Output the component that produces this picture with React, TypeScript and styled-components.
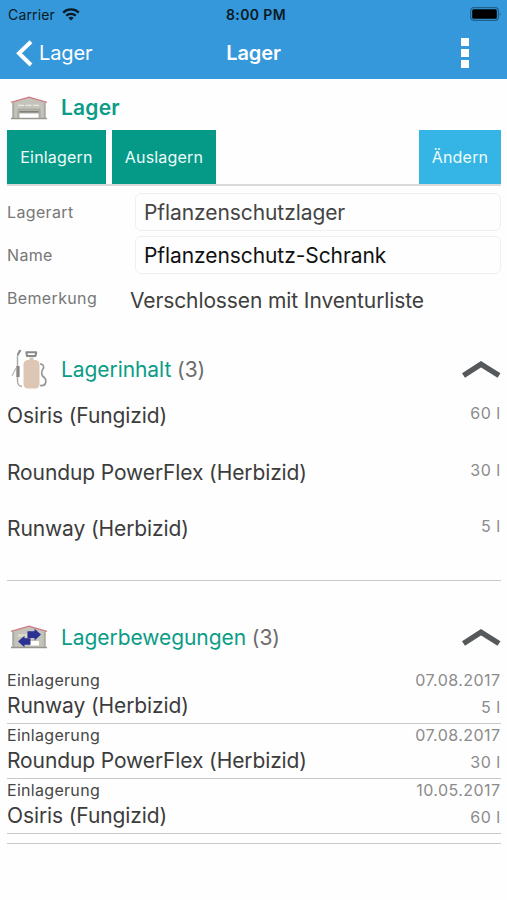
import React from "react";
import styled, { createGlobalStyle } from "styled-components";

const GlobalStyle = createGlobalStyle`
  * { box-sizing: border-box; }
  body {
    margin: 0;
    background: #fefefe;
    font-family: Inter, "Liberation Sans", sans-serif;
    color: #3c3c3c;
  }
`;

const Screen = styled.div`
  width: 100%;
  height: 900px;
  display: flex;
  flex-direction: column;
  overflow: hidden;
`;

const TopArea = styled.header`
  height: 79px;
  background: #3498db;
`;

const StatusBar = styled.div`
  display: grid;
  grid-template-columns: 1fr auto 1fr;
  align-items: center;
  height: 28px;
  padding: 0 5px 0 8px;
  color: #0a1a26;
`;

const Carrier = styled.div`
  display: flex;
  align-items: center;
  gap: 7px;
  font-size: 14px;
  letter-spacing: 0.15px;
`;

const Clock = styled.div`
  padding-left: 2px;
  font-size: 14px;
  font-weight: 600;
  letter-spacing: 0.4px;
`;

const BatterySlot = styled.div`
  display: flex;
  justify-content: flex-end;
`;

const NavBar = styled.nav`
  display: grid;
  grid-template-columns: 1fr auto 1fr;
  align-items: center;
  height: 50px;
  padding: 0 16px;
  color: #fff;
`;

const BackButton = styled.div`
  display: flex;
  align-items: center;
  gap: 6px;
  font-size: 20px;
  letter-spacing: -0.1px;
`;

const NavTitle = styled.div`
  font-size: 20px;
  font-weight: 600;
  letter-spacing: -0.1px;
`;

const MoreButton = styled.div`
  display: flex;
  flex-direction: column;
  align-items: flex-end;
  gap: 3px;
  padding-right: 22px;
`;

const Dot = styled.span`
  width: 8px;
  height: 8px;
  background: #fff;
`;

const Content = styled.main`
  display: flex;
  flex-direction: column;
  padding: 0 6px 0 7px;
`;

const SectionHeader = styled.div<{ $height: number; $space: number }>`
  display: flex;
  align-items: center;
  height: ${(p) => p.$height}px;
  margin-top: ${(p) => p.$space}px;
`;

const IconSlot = styled.div`
  display: flex;
  width: 54px;
  padding-left: 3px;
`;

const SectionTitle = styled.h2<{ $bold?: boolean }>`
  flex: 1;
  margin: 0;
  font-size: 21px;
  font-weight: ${(p) => (p.$bold ? 600 : 400)};
  letter-spacing: ${(p) => (p.$bold ? 0.2 : -0.07)}px;
  color: #0a9c86;
`;

const Count = styled.span`
  color: #6c6c6c;
`;

const ButtonRow = styled.div`
  display: flex;
  gap: 6px;
  height: 57px;
  padding-top: 1px;
  border-bottom: 2px solid #dadada;
`;

const ActionButton = styled.div<{ $width: number; $accent?: boolean }>`
  display: flex;
  align-items: center;
  justify-content: center;
  width: ${(p) => p.$width}px;
  height: 54px;
  margin-left: ${(p) => (p.$accent ? "auto" : 0)};
  background: ${(p) => (p.$accent ? "#34b5e5" : "#049a87")};
  color: #effafa;
  font-size: 16px;
  letter-spacing: 0.2px;
`;

const Form = styled.div`
  display: flex;
  flex-direction: column;
  gap: 5px;
  padding-top: 7px;
`;

const Field = styled.div`
  display: flex;
  align-items: center;
  height: 38px;
`;

const Label = styled.div`
  width: 128px;
  font-size: 16px;
  letter-spacing: 0.35px;
  color: #777;
`;

const Input = styled.div<{ $strong?: boolean }>`
  display: flex;
  align-items: center;
  flex: 1;
  height: 38px;
  padding-left: 8px;
  border: 1px solid #f0f0f0;
  border-radius: 6px;
  font-size: 21px;
  letter-spacing: -0.08px;
  color: ${(p) => (p.$strong ? "#111" : "#444")};
`;

const Note = styled.div`
  padding-top: 4px;
  margin-left: -5px;
  font-size: 21px;
  letter-spacing: -0.11px;
  color: #404040;
`;

const StockList = styled.div`
  display: flex;
  flex-direction: column;
  height: 182px;
  border-bottom: 1px solid #c9c9c9;
`;

const StockRow = styled.div`
  display: flex;
  justify-content: space-between;
  height: 56.5px;
  line-height: 28px;
`;

const ItemName = styled.div`
  padding-top: 3px;
  font-size: 21px;
  letter-spacing: -0.11px;
  color: #3c3c3c;
`;

const Meta = styled.div`
  padding-right: 0.5px;
  font-size: 16px;
  letter-spacing: 0.45px;
  color: #8b8b8b;
`;

const Movement = styled.div`
  height: 55px;
  border-bottom: 1px solid #c9c9c9;
`;

const MovementLine = styled.div<{ $height: number }>`
  display: flex;
  align-items: center;
  justify-content: space-between;
  height: ${(p) => p.$height}px;
`;

const MovementKind = styled.div`
  font-size: 16px;
  letter-spacing: 0.3px;
  color: #464646;
`;

const MovementName = styled.div`
  font-size: 21px;
  letter-spacing: -0.11px;
  color: #3c3c3c;
`;

const Amount = styled(Meta)`
  padding-top: 4px;
`;

const EndRule = styled.div`
  height: 10px;
  border-bottom: 1px solid #c9c9c9;
`;

const WifiIcon = () => (
  <svg width="18" height="13" viewBox="0 0 18 13" fill="none" stroke="#0a1a26" strokeWidth="2.3">
    <path d="M1.2 4.6C5.5.4 12.5.4 16.8 4.6" />
    <path d="M4.2 7.7C6.9 5.2 11.1 5.2 13.8 7.7" />
    <path d="M9 12.5L6.3 9.8C7.8 8.5 10.2 8.5 11.7 9.8Z" fill="#0a1a26" stroke="none" />
  </svg>
);

const BatteryIcon = () => (
  <svg width="32" height="14" viewBox="0 0 32 14">
    <rect x=".7" y=".7" width="27.6" height="12.6" rx="3" fill="none" stroke="#205f88" strokeWidth="1.2" />
    <rect x="2.2" y="2.2" width="24.6" height="9.6" rx="1.5" fill="#000" />
    <path d="M29.7 4.8Q31.5 7 29.7 9.2Z" fill="#205f88" />
  </svg>
);

const BackIcon = () => (
  <svg width="17" height="27" viewBox="0 0 17 27" fill="none" stroke="#fff" strokeWidth="4">
    <path d="M15 1.8L3 13.3L15 25" />
  </svg>
);

const Warehouse = ({ arrows }: { arrows?: boolean }) => (
  <svg width="38" height="24" viewBox="0 0 38 24">
    <path d="M2 6L19 2L36 6V22H2Z" fill="#c3c3bb" />
    <path d="M1 22.5H37" stroke="#96968f" strokeWidth="1.4" />
    <path d="M3.5 7V22M34.5 7V22" stroke="#aaaaa1" strokeWidth="1.5" />
    <path d="M1 6.4L19 1.4L37 6.4" fill="none" stroke="#cf7e86" strokeWidth="1.5" />
    {arrows ? (
      <>
        <path d="M8 9H17V12H8Z" fill="#d9dac9" />
        <path d="M20 16H29V20.5H20Z" fill="#fff" />
        <path d="M17.5 6.3H24.5V3.8L31 9.6L24.5 15.4V12.9H17.5Z" fill="#2b3192" />
        <path d="M20.5 13.2H14.5V10.7L8 16.4L14.5 22.2V19.7H20.5Z" fill="#2b3192" />
      </>
    ) : (
      <>
        <path d="M8 9.3H30" stroke="#e9e9e1" strokeWidth="1.3" strokeDasharray="6 1.5" />
        <path d="M8 22V13.2H30V22" fill="#b4b4ac" stroke="#a4a49c" />
        <path d="M9.5 15.8H28.5" stroke="#76766f" strokeWidth="1.3" />
        <path d="M9.5 17.5H28.5V21.7H9.5Z" fill="#fff" />
      </>
    )}
  </svg>
);

const Sprayer = () => (
  <svg width="38" height="42" viewBox="0 0 38 42" fill="none">
    <path d="M10.5 1.5Q7.5 3 7.5 8V32Q7.5 37 12 37.5" stroke="#a9a9a9" strokeWidth="1.4" />
    <path d="M10.5 1L7.7 6" stroke="#8f8f8f" strokeWidth="2" />
    <path d="M8 17V28" stroke="#858585" strokeWidth="3.2" />
    <path d="M6 19L2 27" stroke="#b9b9b9" strokeWidth="1.3" />
    <path d="M16.3 3.3H26.2L25.5 7H17Z" stroke="#898989" strokeWidth="2" strokeLinejoin="round" />
    <path d="M19.5 8.5H23.5V12H19.5Z" fill="#d5c5b5" />
    <rect x="13.5" y="11" width="16" height="28.5" rx="4.5" fill="#ddc6b3" />
    <path d="M30 15Q34 15 33.5 19Q30.5 23 32.5 27Q37 30 35.5 34Q35 37 30 36.5" stroke="#969696" strokeWidth="1.7" />
  </svg>
);

const ChevronUp = () => (
  <svg width="40" height="19" viewBox="0 0 40 19" fill="none" stroke="#55595c" strokeWidth="5.5">
    <path d="M2.5 15.5L20 4.2L38 15.5" />
  </svg>
);

const stock = [
  { name: "Osiris (Fungizid)", amount: "60 l" },
  { name: "Roundup PowerFlex (Herbizid)", amount: "30 l" },
  { name: "Runway (Herbizid)", amount: "5 l" },
];

const movements = [
  { name: "Runway (Herbizid)", amount: "5 l", date: "07.08.2017" },
  { name: "Roundup PowerFlex (Herbizid)", amount: "30 l", date: "07.08.2017" },
  { name: "Osiris (Fungizid)", amount: "60 l", date: "10.05.2017" },
];

export default function App() {
  return (
    <Screen>
      <GlobalStyle />
      <TopArea>
        <StatusBar>
          <Carrier>
            Carrier
            <WifiIcon />
          </Carrier>
          <Clock>8:00 PM</Clock>
          <BatterySlot>
            <BatteryIcon />
          </BatterySlot>
        </StatusBar>
        <NavBar>
          <BackButton>
            <BackIcon />
            Lager
          </BackButton>
          <NavTitle>Lager</NavTitle>
          <MoreButton>
            <Dot />
            <Dot />
            <Dot />
          </MoreButton>
        </NavBar>
      </TopArea>
      <Content>
        <SectionHeader $height={43} $space={7}>
          <IconSlot>
            <Warehouse />
          </IconSlot>
          <SectionTitle $bold>Lager</SectionTitle>
        </SectionHeader>
        <ButtonRow>
          <ActionButton $width={99}>Einlagern</ActionButton>
          <ActionButton $width={104}>Auslagern</ActionButton>
          <ActionButton $width={82} $accent>
            Ändern
          </ActionButton>
        </ButtonRow>
        <Form>
          <Field>
            <Label>Lagerart</Label>
            <Input>Pflanzenschutzlager</Input>
          </Field>
          <Field>
            <Label>Name</Label>
            <Input $strong>Pflanzenschutz-Schrank</Input>
          </Field>
          <Field>
            <Label>Bemerkung</Label>
            <Note>Verschlossen mit Inventurliste</Note>
          </Field>
        </Form>
        <SectionHeader $height={59} $space={23}>
          <IconSlot>
            <Sprayer />
          </IconSlot>
          <SectionTitle>
            Lagerinhalt <Count>(3)</Count>
          </SectionTitle>
          <ChevronUp />
        </SectionHeader>
        <StockList>
          {stock.map((s) => (
            <StockRow key={s.name}>
              <ItemName>{s.name}</ItemName>
              <Meta>{s.amount}</Meta>
            </StockRow>
          ))}
        </StockList>
        <SectionHeader $height={64} $space={24}>
          <IconSlot>
            <Warehouse arrows />
          </IconSlot>
          <SectionTitle>
            Lagerbewegungen <Count>(3)</Count>
          </SectionTitle>
          <ChevronUp />
        </SectionHeader>
        {movements.map((m) => (
          <Movement key={m.name}>
            <MovementLine $height={22}>
              <MovementKind>Einlagerung</MovementKind>
              <Meta>{m.date}</Meta>
            </MovementLine>
            <MovementLine $height={28}>
              <MovementName>{m.name}</MovementName>
              <Amount>{m.amount}</Amount>
            </MovementLine>
          </Movement>
        ))}
        <EndRule />
      </Content>
    </Screen>
  );
}
